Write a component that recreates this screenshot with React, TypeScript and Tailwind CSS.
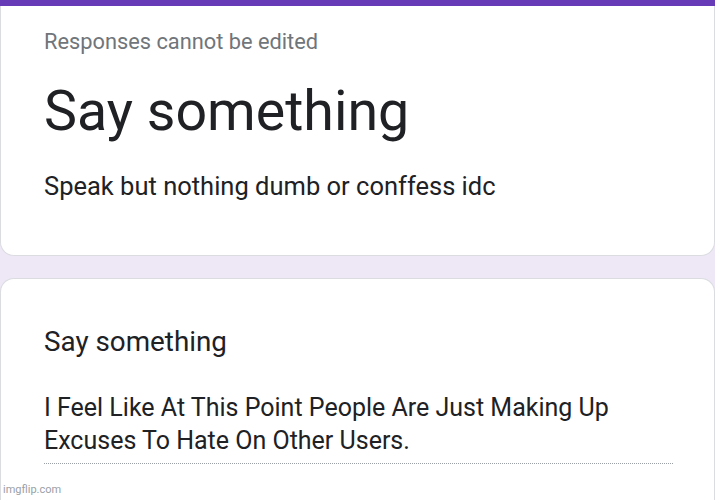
export default function App() {
  return (
    <div
      className="flex h-[500px] w-[715px] flex-col overflow-hidden bg-[#ede7f6] text-[#202124]"
      style={{ fontFamily: "Roboto, 'Liberation Sans', sans-serif" }}
    >
      <div className="h-[6px] bg-[#673ab7]" />
      <section className="h-[250px] rounded-b-[14px] border border-t-0 border-[#dadce0] bg-white px-[43px] pt-[24px]">
        <p className="text-[21.8px] leading-[24px] text-[#70757a]">Responses cannot be edited</p>
        <h1 className="mt-[26px] text-[55.5px] leading-[64px]">Say something</h1>
        <p className="mt-[27px] text-[25.5px] leading-[30px]">Speak but nothing dumb or conffess idc</p>
      </section>
      <section className="relative mt-[22px] flex-1 rounded-t-[14px] border border-b-0 border-[#dadce0] bg-white px-[43px] pt-[46px]">
        <h2 className="text-[27.8px] leading-[34px]">Say something</h2>
        <div className="mt-[32px] w-[629px] border-b border-dotted border-[#9aa0a6] pb-[6px]">
          <p className="text-[25px] leading-[33px]">
            I Feel Like At This Point People Are Just Making Up Excuses To Hate On Other Users.
          </p>
        </div>
        <span className="absolute bottom-[2px] left-[2px] text-[11px] text-[#9aa0a6]">imgflip.com</span>
      </section>
    </div>
  );
}
